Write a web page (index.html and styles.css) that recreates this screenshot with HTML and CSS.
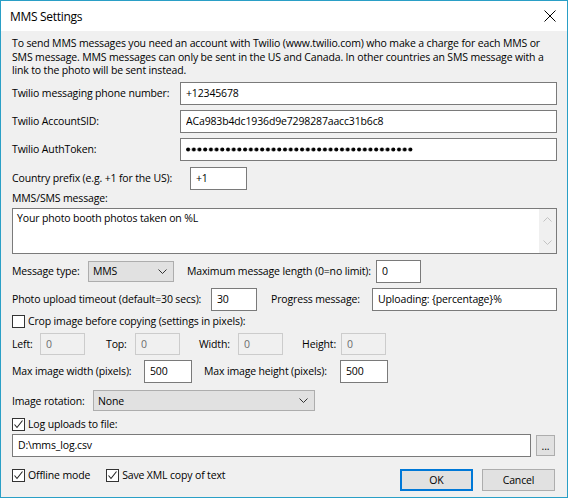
FILE: index.html
```html
<!DOCTYPE html>
<html lang="en">
<head>
  <meta charset="UTF-8">
  <title>MMS Settings</title>
  <link rel="stylesheet" href="styles.css">
</head>
<body>
  <div class="window">
    <div class="titlebar">
      <span class="title">MMS Settings</span>
      <svg class="close" width="12" height="12" viewBox="0 0 12 12">
        <path d="M0.5 0.5 L11.5 11.5 M11.5 0.5 L0.5 11.5" stroke="#000" stroke-width="1" fill="none"/>
      </svg>
    </div>

    <div class="content">
      <p class="intro">To send MMS messages you need an account with Twilio (www.twilio.com) who make a charge for each MMS or<br>SMS message. MMS messages can only be sent in the US and Canada. In other countries an SMS message with a<br>link to the photo will be sent instead.</p>

      <div class="row row-phone">
        <label class="lbl" style="width:168px">Twilio messaging phone number:</label>
        <input class="field grow" type="text" value="+12345678">
      </div>

      <div class="row row-sid">
        <label class="lbl" style="width:168px">Twilio AccountSID:</label>
        <input class="field grow" type="text" value="ACa983b4dc1936d9e7298287aacc31b6c8">
      </div>

      <div class="row row-token">
        <label class="lbl" style="width:168px">Twilio AuthToken:</label>
        <div class="field grow password">
          <!-- masked token: 40 dots -->
          <svg class="dots" width="228" height="5" viewBox="0 0 228 5">
            <defs>
              <pattern id="dot" width="5.7" height="5" patternUnits="userSpaceOnUse">
                <circle cx="2.1" cy="2.5" r="2" fill="#000"/>
              </pattern>
            </defs>
            <rect width="228" height="5" fill="url(#dot)"/>
          </svg>
        </div>
      </div>

      <div class="row row-country">
        <label class="lbl" style="width:178px">Country prefix (e.g. +1 for the US):</label>
        <input class="field" style="width:57px" type="text" value="+1">
      </div>

      <div class="caption">MMS/SMS message:</div>
      <div class="memo">
        <div class="memo-text">Your photo booth photos taken on %L</div>
        <div class="scrollbar">
          <svg width="9" height="5" viewBox="0 0 9 5"><path d="M0.5 4.5 L4.5 0.5 L8.5 4.5" stroke="#c2c2c2" fill="none"/></svg>
          <svg width="9" height="5" viewBox="0 0 9 5"><path d="M0.5 0.5 L4.5 4.5 L8.5 0.5" stroke="#c2c2c2" fill="none"/></svg>
        </div>
      </div>

      <div class="row row-type">
        <label class="lbl" style="width:76px">Message type:</label>
        <div class="select" style="width:86px">
          <span>MMS</span>
          <svg width="9" height="5" viewBox="0 0 9 5"><path d="M0.5 0.5 L4.5 4.5 L8.5 0.5" stroke="#333" fill="none"/></svg>
        </div>
        <label class="lbl" style="width:189px; margin-left:13px">Maximum message length (0=no limit):</label>
        <input class="field" style="width:45px" type="text" value="0">
      </div>

      <div class="row row-timeout">
        <label class="lbl" style="width:199px">Photo upload timeout (default=30 secs):</label>
        <input class="field" style="width:46px" type="text" value="30">
        <label class="lbl" style="width:101px; margin-left:14px">Progress message:</label>
        <input class="field grow" type="text" value="Uploading: {percentage}%">
      </div>

      <div class="check-row row-crop">
        <span class="check"></span>
        <span>Crop image before copying (settings in pixels):</span>
      </div>

      <div class="row row-crop-fields">
        <label class="lbl" style="width:28px">Left:</label>
        <input class="field disabled" style="width:45px" type="text" value="0" disabled>
        <label class="lbl" style="width:29px; margin-left:21px">Top:</label>
        <input class="field disabled" style="width:45px" type="text" value="0" disabled>
        <label class="lbl" style="width:39px; margin-left:19px">Width:</label>
        <input class="field disabled" style="width:45px" type="text" value="0" disabled>
        <label class="lbl right" style="width:58px">Height:</label>
        <input class="field disabled" style="width:45px" type="text" value="0" disabled>
      </div>

      <div class="row row-size">
        <label class="lbl" style="width:132px">Max image width (pixels):</label>
        <input class="field" style="width:48px" type="text" value="500">
        <label class="lbl" style="width:136px; margin-left:12px">Max image height (pixels):</label>
        <input class="field" style="width:48px" type="text" value="500">
      </div>

      <div class="row row-rotation">
        <label class="lbl" style="width:81px">Image rotation:</label>
        <div class="select" style="width:222px">
          <span>None</span>
          <svg width="9" height="5" viewBox="0 0 9 5"><path d="M0.5 0.5 L4.5 4.5 L8.5 0.5" stroke="#333" fill="none"/></svg>
        </div>
      </div>

      <div class="check-row row-log">
        <span class="check checked"><svg width="11" height="11" viewBox="0 0 11 11"><path d="M1.5 5.5 L4 8.5 L9.5 1.5" stroke="#222" stroke-width="1.1" fill="none"/></svg></span>
        <span>Log uploads to file:</span>
      </div>

      <div class="row row-logfile">
        <input class="field grow" type="text" value="D:\mms_log.csv">
        <button class="btn browse">...</button>
      </div>

      <div class="footer">
        <div class="check-row">
          <span class="check checked"><svg width="11" height="11" viewBox="0 0 11 11"><path d="M1.5 5.5 L4 8.5 L9.5 1.5" stroke="#222" stroke-width="1.1" fill="none"/></svg></span>
          <span>Offline mode</span>
        </div>
        <div class="check-row xml">
          <span class="check checked"><svg width="11" height="11" viewBox="0 0 11 11"><path d="M1.5 5.5 L4 8.5 L9.5 1.5" stroke="#222" stroke-width="1.1" fill="none"/></svg></span>
          <span>Save XML copy of text</span>
        </div>
        <button class="btn ok">OK</button>
        <button class="btn cancel">Cancel</button>
      </div>
    </div>
  </div>
</body>
</html>
```
FILE: styles.css
```css
* {
  margin: 0;
  padding: 0;
  box-sizing: border-box;
}

body {
  font-family: 'Open Sans', 'Noto Sans', sans-serif;
  font-size: 10.5px;
  letter-spacing: -0.15px;
  color: #000;
  background: #fff;
}

.window {
  width: 568px;
  height: 498px;
  border: 1px solid #2a9fc6;
  background: #f0f0f0;
  display: flex;
  flex-direction: column;
}

.titlebar {
  height: 30px;
  background: #fff;
  display: flex;
  align-items: center;
  justify-content: space-between;
  padding: 0 11px 0 9px;
}

.title {
  font-size: 12px;
  letter-spacing: -0.3px;
}

.close {
  display: block;
}

.content {
  padding: 6px 10px 0 11px;
}

.intro {
  line-height: 13.5px;
  white-space: nowrap;
}

.row {
  display: flex;
  align-items: center;
  height: 23px;
  margin-top: 5px;
}

.row-phone { margin-top: 4px; }
.row-country { margin-top: 6px; }
.row-type { margin-top: 6px; }
.row-crop-fields { margin-top: 5px; height: 22px; }
.row-rotation { margin-top: 7px; height: 22px; }
.row-logfile { margin-top: 3px; }

.lbl {
  flex: none;
  white-space: nowrap;
}

.lbl.right {
  text-align: right;
  padding-right: 5px;
}

.grow {
  flex: 1;
  min-width: 0;
}

.field {
  height: 100%;
  border: 1px solid #7a7a7a;
  background: #fff;
  padding: 0 5px;
  font: inherit;
  letter-spacing: inherit;
  color: #000;
  outline: none;
}

.field.disabled {
  border-color: #cccccc;
  background: #f0f0f0;
  color: #6d6d6d;
}

.password {
  display: flex;
  align-items: center;
}

.dots {
  display: block;
}

.caption {
  height: 14px;
  margin-top: 1px;
  line-height: 14px;
}

.memo {
  margin-top: 3px;
  height: 46px;
  border: 1px solid #7a7a7a;
  background: #fff;
  display: flex;
}

.memo-text {
  flex: 1;
  padding: 2px 4px;
}

.scrollbar {
  width: 17px;
  background: #f0f0f0;
  display: flex;
  flex-direction: column;
  justify-content: space-between;
  align-items: center;
  padding: 8px 0 8px;
}

.scrollbar svg {
  display: block;
}

.select {
  flex: none;
  height: 21px;
  border: 1px solid #adadad;
  background: #e1e1e1;
  display: flex;
  align-items: center;
  justify-content: space-between;
  padding: 0 6px 0 4px;
}

.select svg {
  display: block;
}

.check-row {
  display: flex;
  align-items: center;
  height: 13px;
  gap: 3px;
  white-space: nowrap;
}

.row-crop { margin-top: 4px; }
.row-log { margin-top: 6px; }

.check {
  flex: none;
  width: 13px;
  height: 13px;
  border: 1px solid #333;
  background: #fff;
  display: flex;
  align-items: center;
  justify-content: center;
}

.check svg {
  display: block;
}

.btn {
  font: inherit;
  letter-spacing: inherit;
  color: #000;
  background: #e1e1e1;
  border: 1px solid #adadad;
  height: 21px;
}

.browse {
  width: 19px;
  margin-left: 5px;
  margin-right: 2px;
  line-height: 1;
  padding-top: 3px;
}

.footer {
  display: flex;
  align-items: flex-start;
  margin-top: 12px;
}

.footer .xml {
  margin-left: 16px;
}

.ok {
  margin-left: auto;
  width: 73px;
  height: 22px;
  border: 2px solid #0078d7;
}

.cancel {
  width: 73px;
  height: 22px;
  margin-left: 9px;
  margin-right: 2px;
}
```
